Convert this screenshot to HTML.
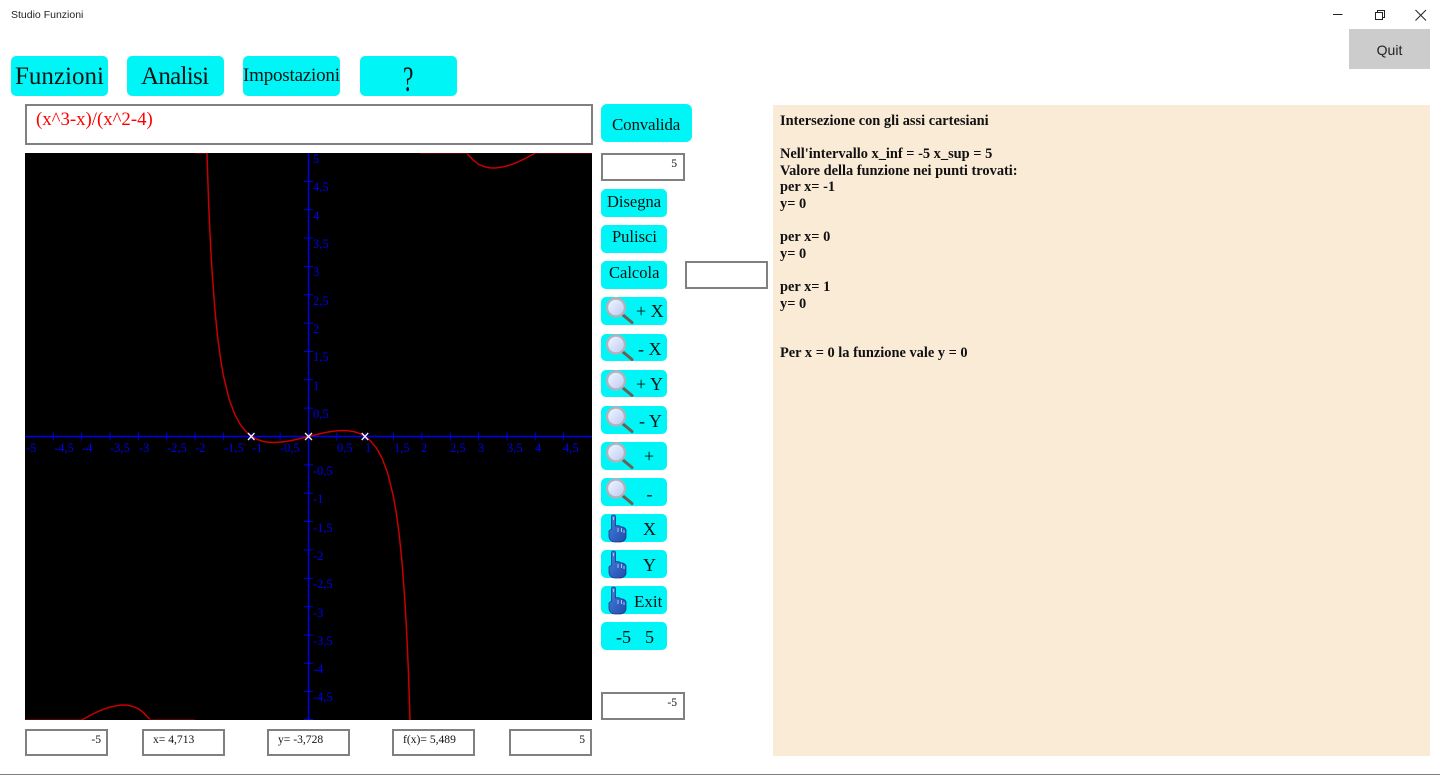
<!DOCTYPE html>
<html lang="it">
<head>
<meta charset="utf-8">
<title>Studio Funzioni</title>
<style>
html,body{margin:0;padding:0;width:1440px;height:775px;overflow:hidden;background:#fff}
body{position:relative;font-family:"Liberation Serif",serif;color:#000}
.titlebar{position:absolute;left:11px;top:9px;font:10.5px/13px "Liberation Sans",sans-serif;color:#222}
.btn{position:absolute;margin:0;padding:0;border:0;background:#00f6f6;border-radius:5px;overflow:visible;font-family:"Liberation Serif",serif;color:#0a1414}
.sm{left:601px;width:66px;height:28px}
.btn span{position:absolute;line-height:1;white-space:nowrap}
.btn svg{position:absolute;left:0;top:0;overflow:visible}
.f18 span{font-size:18px}
.f165 span{font-size:16.5px}
.box{position:absolute;box-sizing:border-box;border:2px solid #808080;background:#fff;font-size:11.6px;line-height:12px;color:#111;white-space:nowrap}
.box.r{text-align:right}
.low{height:27px;width:83px;padding:2.5px 5px 0 9px;top:729px}
#panel{position:absolute;left:773px;top:105px;width:657px;height:651px;background:#faebd7;box-sizing:border-box;padding:8px 7px;font-weight:bold;font-size:14.4px;line-height:16.6px;color:#111;white-space:pre}
#quit{position:absolute;left:1349px;top:29px;width:81px;height:40px;background:#ccc;font:14px/42px "Liberation Sans",sans-serif;text-align:center;color:#222}
#expr{position:absolute;left:25px;top:104px;width:568px;height:41px;box-sizing:border-box;border:2px solid #808080;background:#fff;color:#f00;font-size:18.8px;line-height:22px;padding:3px 0 0 9px}
#bottom{position:absolute;left:0;top:774px;width:1440px;height:1px;background:#7a8084}
svg text{font-family:"Liberation Serif",serif}
</style>
</head>
<body>
<svg width="0" height="0" style="position:absolute">
<defs>
<linearGradient id="lens" x1="0" y1="0" x2="1" y2="1"><stop offset="0" stop-color="#f6f9ff"/><stop offset="1" stop-color="#b8c8f2"/></linearGradient>
<linearGradient id="handg" x1="0" y1="0" x2="1" y2="1"><stop offset="0" stop-color="#4a80d8"/><stop offset="1" stop-color="#1f4cae"/></linearGradient>
<symbol id="mag" viewBox="0 0 34 28" width="34" height="28" overflow="visible">
<line x1="22" y1="18" x2="31" y2="25.5" stroke="#6a6056" stroke-width="3" stroke-linecap="round"/>
<circle cx="15" cy="10.5" r="9" fill="url(#lens)" stroke="#b0b2bc" stroke-width="2.4"/>
</symbol>
<symbol id="hand" viewBox="0 0 34 28" width="34" height="28" overflow="visible">
<path d="M10.5 2.5C10.5 .5 14.5 .5 14.5 2.5V12C17 11 19 12 20 13C22 12.5 24.5 14 25 16V23C25 26 22 28 18 28H14C10 28 8 25 8 22V17L10.5 15Z" fill="url(#handg)" stroke="#1a3a8e" stroke-width=".8"/>
<path d="M12.5 3V6M17 14V18M20.5 14V18M23 16V19" stroke="#a8c4f4" stroke-width="1" fill="none"/>
</symbol>
</defs>
</svg>

<div class="titlebar">Studio Funzioni</div>
<svg style="position:absolute;left:1325px;top:5px" width="110" height="20" fill="none" stroke="#222" stroke-width="1">
<path d="M8 9.5H17.5"/>
<path d="M50.5 7.5H57.5V14.5H50.5ZM52.5 7.5V5.5H59.5V12.5H57.5"/>
<path d="M90.5 5L101 15.5M101 5L90.5 15.5"/>
</svg>
<div id="quit">Quit</div>

<button class="btn" style="left:11px;top:56px;width:97px;height:40px"><span style="left:4px;top:8px;font-size:25px">Funzioni</span></button>
<button class="btn" style="left:127px;top:56px;width:97px;height:40px"><span style="left:14px;top:8px;font-size:25px;letter-spacing:-.7px">Analisi</span></button>
<button class="btn" style="left:243px;top:56px;width:97px;height:40px"><span style="left:0;top:9.5px;font-size:19px;letter-spacing:-.2px">Impostazioni</span></button>
<button class="btn" style="left:360px;top:56px;width:97px;height:40px"><span style="left:43px;top:5px;font-size:36px;transform:scaleX(.65);transform-origin:left">?</span></button>

<div id="expr">(x^3-x)/(x^2-4)</div>

<svg style="position:absolute;left:25px;top:153px" width="567" height="567" viewBox="25 153 567 567">
<rect x="25" y="153" width="567" height="567" fill="#000"/>
<path d="M25 436.5H592M308.5 153V720" stroke="#0000f0" stroke-width="1.4" fill="none"/>
<path d="M53.35 432.5v8M81.7 432.5v8M110.05 432.5v8M138.4 432.5v8M166.75 432.5v8M195.1 432.5v8M223.45 432.5v8M251.8 432.5v8M280.15 432.5v8M336.85 432.5v8M365.2 432.5v8M393.55 432.5v8M421.9 432.5v8M450.25 432.5v8M478.6 432.5v8M506.95 432.5v8M535.3 432.5v8M563.65 432.5v8M304 181.35h9M304 209.7h9M304 238.05h9M304 266.4h9M304 294.75h9M304 323.1h9M304 351.45h9M304 379.8h9M304 408.15h9M304 464.85h9M304 493.2h9M304 521.55h9M304 549.9h9M304 578.25h9M304 606.6h9M304 634.95h9M304 663.3h9M304 691.65h9M304 719.5h9" stroke="#0000e0" stroke-width="1" fill="none"/>
<g fill="#0000f0" font-size="12.5">
<text x="26" y="452">-5</text><text x="54" y="452">-4,5</text><text x="82" y="452">-4</text><text x="110" y="452">-3,5</text><text x="139" y="452">-3</text><text x="167" y="452">-2,5</text><text x="195" y="452">-2</text><text x="224" y="452">-1,5</text><text x="252" y="452">-1</text><text x="280" y="452">-0,5</text>
<text x="337" y="452">0,5</text><text x="365" y="452">1</text><text x="394" y="452">1,5</text><text x="421" y="452">2</text><text x="450" y="452">2,5</text><text x="478" y="452">3</text><text x="507" y="452">3,5</text><text x="535" y="452">4</text><text x="563" y="452">4,5</text>
<text x="313" y="163">5</text><text x="313" y="191">4,5</text><text x="313" y="220">4</text><text x="313" y="248">3,5</text><text x="313" y="276">3</text><text x="313" y="305">2,5</text><text x="313" y="333">2</text><text x="313" y="361">1,5</text><text x="313" y="390">1</text><text x="313" y="418">0,5</text>
<text x="313" y="475">-0,5</text><text x="313" y="503">-1</text><text x="313" y="532">-1,5</text><text x="313" y="560">-2</text><text x="313" y="588">-2,5</text><text x="313" y="617">-3</text><text x="313" y="645">-3,5</text><text x="313" y="673">-4</text><text x="313" y="701">-4,5</text>
</g>
<path d="M195 153.4H206M420 153.4H467M535 153.4H592M25 719.6H82M150 719.6H195" stroke="#7a0000" stroke-width=".8" fill="none"/>
<g transform="translate(308.5 436.5) scale(56.7 -56.7)" fill="none" stroke="#c80000" stroke-width="1.5" stroke-linejoin="round">
<polyline vector-effect="non-scaling-stroke" points="-1.8,5.3 -1.79,4.957 -1.76,4.091 -1.73,3.423 -1.7,2.895 -1.65,2.225 -1.6,1.733 -1.55,1.361 -1.5,1.071 -1.4,.659 -1.3,.388 -1.2,.206 -1.1,.0828 -1,0 -.9,-.0536 -.8,-.0857 -.7,-.1017 -.6,-.1055 -.5,-.1 -.4,-.0875 -.3,-.0698 -.2,-.0485 -.1,-.0248 0,0 .1,.0248 .2,.0485 .3,.0698 .4,.0875 .5,.1 .6,.1055 .7,.1017 .8,.0857 .9,.0536 1,0 1.1,-.0828 1.2,-.206 1.3,-.388 1.4,-.659 1.5,-1.071 1.55,-1.361 1.6,-1.733 1.65,-2.225 1.7,-2.895 1.73,-3.423 1.76,-4.091 1.79,-4.957 1.8,-5.3"/>
<polyline vector-effect="non-scaling-stroke" points="2.8,4.987 2.9,4.88 3,4.8 3.1,4.76 3.2,4.738 3.3,4.735 3.4,4.75 3.5,4.773 3.6,4.805 3.7,4.845 3.8,4.892 3.9,4.945 4,5"/>
<polyline vector-effect="non-scaling-stroke" points="-2.8,-4.987 -2.9,-4.88 -3,-4.8 -3.1,-4.76 -3.2,-4.738 -3.3,-4.735 -3.4,-4.75 -3.5,-4.773 -3.6,-4.805 -3.7,-4.845 -3.8,-4.892 -3.9,-4.945 -4,-5"/>
</g>
<path d="M248 433l6.5 7M254.5 433l-6.5 7M305 433l7 7M312 433l-7 7M361.7 433l6.5 7M368.2 433l-6.5 7" stroke="#f4f4f4" stroke-width="1.3" fill="none"/>
</svg>

<button class="btn f165" style="left:601px;top:104px;width:91px;height:38px;border-radius:6px"><span style="left:11px;top:12px;font-size:17px;letter-spacing:-.2px">Convalida</span></button>
<div class="box r" style="left:601px;top:153px;width:84px;height:28px;padding:3px 6px 0 0">5</div>

<button class="btn sm f165" style="top:189px"><span style="left:6px;top:4.5px">Disegna</span></button>
<button class="btn sm f165" style="top:225px"><span style="left:11px;top:4px">Pulisci</span></button>
<button class="btn sm f165" style="top:261px"><span style="left:8px;top:4px">Calcola</span></button>
<div class="box" style="left:685px;top:261px;width:83px;height:28px"></div>

<button class="btn sm f18" style="top:297px"><svg width="34" height="28"><use href="#mag"/></svg><span style="left:35px;top:5px">+ X</span></button>
<button class="btn sm f18" style="top:334px;height:27px"><svg width="34" height="28"><use href="#mag"/></svg><span style="left:37px;top:6px">- X</span></button>
<button class="btn sm f18" style="top:370px;height:27px"><svg width="34" height="28"><use href="#mag"/></svg><span style="left:35px;top:5px">+ Y</span></button>
<button class="btn sm f18" style="top:406px"><svg width="34" height="28"><use href="#mag"/></svg><span style="left:38px;top:6px">- Y</span></button>
<button class="btn sm f18" style="top:442px"><svg width="34" height="28"><use href="#mag"/></svg><span style="left:43px;top:5px">+</span></button>
<button class="btn sm f18" style="top:478px"><svg width="34" height="28"><use href="#mag"/></svg><span style="left:45.5px;top:7px">-</span></button>
<button class="btn sm f18" style="top:514px"><svg width="34" height="28"><use href="#hand"/></svg><span style="left:42px;top:6px">X</span></button>
<button class="btn sm f18" style="top:550px"><svg width="34" height="28"><use href="#hand"/></svg><span style="left:42px;top:6px">Y</span></button>
<button class="btn sm f18" style="top:586px"><svg width="34" height="28"><use href="#hand"/></svg><span style="left:33px;top:7px;font-size:17px">Exit</span></button>
<button class="btn sm f18" style="top:622px"><span style="left:15px;top:6px">-5</span><span style="left:44px;top:6px">5</span></button>

<div class="box r" style="left:601px;top:692px;width:84px;height:28px;padding:3px 6px 0 0">-5</div>

<div class="box r low" style="left:25px">-5</div>
<div class="box low" style="left:142px">x= 4,713</div>
<div class="box low" style="left:267px">y= -3,728</div>
<div class="box low" style="left:392px">f(x)= 5,489</div>
<div class="box r low" style="left:509px">5</div>

<div id="panel">Intersezione con gli assi cartesiani

Nell'intervallo x_inf = -5 x_sup = 5
Valore della funzione nei punti trovati:
per x= -1
y= 0

per x= 0
y= 0

per x= 1
y= 0


Per x = 0 la funzione vale y = 0</div>

<div id="bottom"></div>
</body>
</html>
